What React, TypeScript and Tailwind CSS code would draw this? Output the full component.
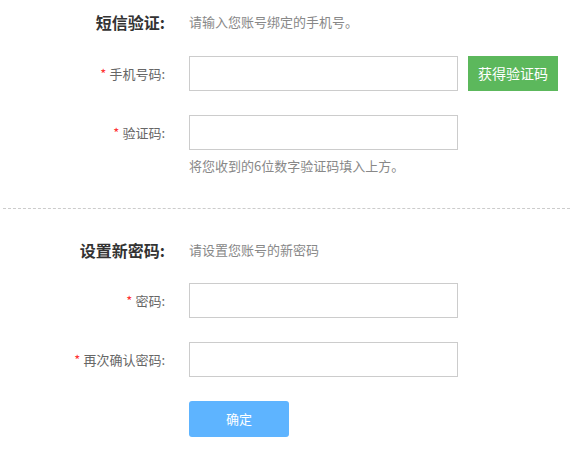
import { useState } from "react";

// 表单行：左边标签，右边内容
function Row({ label, required, children, className = "" }: { label: React.ReactNode; required?: boolean; children: React.ReactNode; className?: string }) {
  return (
    <div className={"flex items-center " + className}>
      <div className="w-[165px] shrink-0 text-right text-[13px] text-[#666]">
        {required && <span className="text-[#f33] mr-[3px]">*</span>}
        {label}
      </div>
      <div className="ml-[24px] flex items-center">{children}</div>
    </div>
  );
}

function Heading({ title, desc, className = "" }: { title: string; desc: string; className?: string }) {
  return (
    <div className={"flex items-center h-[20px] " + className}>
      <div className="w-[165px] shrink-0 text-right text-[16px] font-bold text-[#333]">{title}</div>
      <div className="ml-[24px] text-[13px] text-[#888]">{desc}</div>
    </div>
  );
}

export default function App() {
  const [phone, setPhone] = useState("");
  const [code, setCode] = useState("");
  const [pwd, setPwd] = useState("");
  const [pwd2, setPwd2] = useState("");

  const inputCls = "w-[269px] h-[35px] border border-[#ccc] bg-white px-2 text-[13px] outline-none";

  return (
    <div className="w-[570px] h-[456px] bg-white font-['Microsoft_YaHei','Noto_Sans_CJK_SC',sans-serif] pt-[12px]">
      <Heading title="短信验证:" desc="请输入您账号绑定的手机号。" />

      <Row label="手机号码:" required className="mt-[24px]">
        <input className={inputCls} value={phone} onChange={(e) => setPhone(e.target.value)} />
        <button className="ml-[10px] w-[90px] h-[35px] bg-[#5cb85c] text-white text-[14px]">获得验证码</button>
      </Row>

      <Row label="验证码:" required className="mt-[24px]">
        <input className={inputCls} value={code} onChange={(e) => setCode(e.target.value)} />
      </Row>
      <div className="ml-[189px] mt-[6px] h-[20px] leading-[20px] text-[13px] text-[#888]">将您收到的6位数字验证码填入上方。</div>

      <div className="ml-[3px] mt-[32px] border-t border-dashed border-[#ccc]" />

      <Heading title="设置新密码:" desc="请设置您账号的新密码" className="mt-[31px]" />

      <Row label="密码:" required className="mt-[23px]">
        <input type="password" className={inputCls} value={pwd} onChange={(e) => setPwd(e.target.value)} />
      </Row>
      <Row label="再次确认密码:" required className="mt-[24px]">
        <input type="password" className={inputCls} value={pwd2} onChange={(e) => setPwd2(e.target.value)} />
      </Row>

      <div className="ml-[189px] mt-[24px]">
        <button className="w-[100px] h-[36px] rounded-[3px] bg-[#5eb4ff] text-white text-[13px]">确定</button>
      </div>
    </div>
  );
}
